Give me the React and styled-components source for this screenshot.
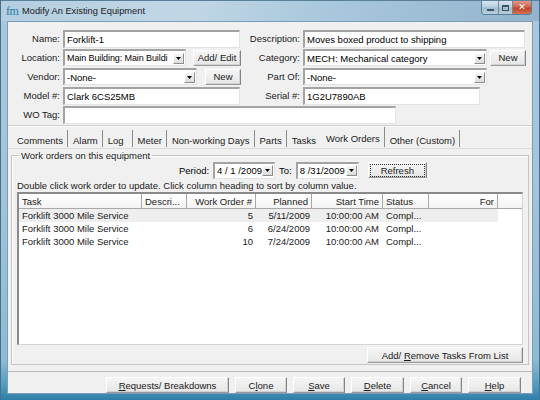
import React from 'react';
import styled, { createGlobalStyle } from 'styled-components';

const Global = createGlobalStyle`
  html, body { margin: 0; padding: 0; background: #fff; }
  body { font-family: "Liberation Sans", Arial, sans-serif; font-size: 9.5px; color: #000; }
  * { box-sizing: border-box; }
`;

const Window = styled.div`
  width: 540px;
  height: 400px;
  display: flex;
  flex-direction: column;
  padding: 0 6px 6px 6px;
  border-left: 1px solid #45708f;
  border-right: 1px solid #45708f;
  background: linear-gradient(to bottom, #a9c8dd 0%, #a2c3d9 50%, #8ebad3 90%, #4a97bb 97%, #2f7ea8 100%);
  overflow: hidden;
`;

const TitleBar = styled.div`
  height: 21px;
  flex: none;
  display: flex;
  align-items: center;
  margin: 0 -6px;
  padding: 0 7px 0 5px;
  background: linear-gradient(to right, rgba(255,255,255,0.12) 0%, rgba(255,255,255,0.28) 35%, rgba(255,255,255,0.05) 55%, rgba(40,90,130,0.18) 100%);
  border-top: 1px solid #5a7f99;
`;

const AppIcon = styled.span`
  font-family: "Liberation Serif", serif;
  font-size: 12px;
  color: #2b7aa6;
  width: 14px;
  margin-right: 2px;
  letter-spacing: -0.5px;
`;

const TitleText = styled.span`
  font-size: 9.3px;
  color: #1a1a1a;
  flex: 1;
`;

const Controls = styled.div`
  align-self: flex-start;
  display: flex;
  border: 1px solid #5b7e96;
  border-top: none;
  border-radius: 0 0 4px 4px;
  overflow: hidden;
`;

const CtlBtn = styled.div`
  width: ${p => p.$w}px;
  height: 13px;
  display: flex;
  align-items: center;
  justify-content: center;
  background: ${p => p.$close
    ? 'linear-gradient(to bottom, #e29a86 0%, #d1644c 45%, #c2412a 55%, #d4734f 100%)'
    : 'linear-gradient(to bottom, #d7e6ef 0%, #b7cedd 45%, #9fbccf 55%, #b7d0de 100%)'};
  border-left: ${p => p.$first ? 'none' : '1px solid #6d8ca2'};
`;

const MinGlyph = styled.span`
  width: 7px; height: 2px; background: #3d5466; margin-top: 4px;
`;
const MaxGlyph = styled.span`
  width: 7px; height: 6px; border: 1px solid #3d5466; border-top-width: 2px;
`;
const CloseGlyph = styled.span`
  color: #fff; font-weight: bold; font-size: 9px; line-height: 9px;
  font-family: "DejaVu Sans", sans-serif;
`;

const Client = styled.div`
  flex: 1;
  display: flex;
  flex-direction: column;
  background: #f0f0f0;
  border: 1px solid #7f9db2;
`;

const FormArea = styled.div`
  padding-top: 7px;
  display: flex;
  flex-direction: column;
`;

const Row = styled.div`
  height: 19px;
  display: flex;
  align-items: center;
`;

const Label = styled.div`
  width: ${p => p.$w}px;
  flex: none;
  text-align: right;
  padding-right: 3px;
  white-space: nowrap;
  color: #1a1a1a;
`;

const Field = styled.div`
  width: ${p => p.$w}px;
  flex: none;
  display: flex;
  align-items: center;
  justify-content: space-between;
`;

const TextBox = styled.div`
  width: ${p => p.$w}px;
  height: 18px;
  background: #fff;
  border-style: solid;
  border-width: 2px 1px 1px 2px;
  border-color: #a3a3a3 #e3e3e3 #e3e3e3 #a3a3a3;
  padding: 0 2px;
  display: flex;
  align-items: center;
  white-space: nowrap;
  overflow: hidden;
`;

const Combo = styled.div`
  width: ${p => p.$w}px;
  height: 17px;
  background: #fff;
  border-style: solid;
  border-width: 2px 1px 1px 2px;
  border-color: #a3a3a3 #e3e3e3 #e3e3e3 #a3a3a3;
  display: flex;
  align-items: center;
  padding-left: 2px;
  padding-right: 1px;
`;

const ComboText = styled.span`
  flex: 1;
  white-space: nowrap;
  overflow: hidden;
  font-size: ${p => p.$fs ?? 9.5}px;
  letter-spacing: ${p => p.$ls ?? 0}px;
`;

const DropBtn = styled.span`
  width: 11px;
  height: 11px;
  flex: none;
  background: linear-gradient(#f4f4f4, #dcdcdc);
  border-style: solid;
  border-width: 1px;
  border-color: #fff #8c8c8c #8c8c8c #fff;
  display: flex;
  align-items: center;
  justify-content: center;
`;

const Arrow = () => (
  <svg width="5" height="3" viewBox="0 0 5 3"><path d="M0 0h5L2.5 3z" fill="#000" /></svg>
);

const Button = styled.div`
  width: ${p => p.$w}px;
  height: 16px;
  flex: none;
  display: flex;
  align-items: center;
  justify-content: center;
  background: linear-gradient(#f5f5f5, #e6e6e6);
  border-style: solid;
  border-width: 1px;
  border-color: #ffffff #848484 #9a9a9a #ffffff;
  box-shadow: inset -1px -1px 0 #d2d2d2;
  white-space: nowrap;
  color: #1a1a1a;
`;

const Focus = styled.span`
  border: 1px dotted #333;
  padding: 0 10px;
  line-height: 11px;
`;

const Divider = styled.div`
  margin-top: 1px;
  height: 2px;
  border-top: 1px solid #cfcfcf;
  border-bottom: 1px solid #fafafa;
`;

const TabStrip = styled.div`
  margin-top: 1px;
  height: 20px;
  display: flex;
  align-items: flex-end;
  padding-left: 4px;
`;

const Tab = styled.div`
  height: ${p => p.$active ? 20 : 17}px;
  line-height: 11px;
  padding: ${p => p.$active ? '6px' : '5px'} ${p => 4 + (p.$extra || 0)}px 0 5px;
  border-right: 1px solid ${p => p.$sep ? '#8a8a8a' : 'transparent'};
  white-space: nowrap;
  margin-bottom: 1px;
  color: #1a1a1a;
`;

const TabPanel = styled.div`
  height: 224px;
  border-top: 1px solid #dcdcdc;
  border-bottom: 1px solid #bcbcbc;
  padding: 1px 3px 0 3px;
`;

const Group = styled.fieldset`
  margin: 0;
  padding: 0 5px 1px 5px;
  border: 1px solid #c4c4c4;
  box-shadow: inset 1px 1px 0 #fff;
  display: flex;
  flex-direction: column;
  min-width: 0;
`;

const Legend = styled.legend`
  padding: 0 2px;
  margin-left: 2px;
  line-height: 11px;
  color: #1a1a1a;
`;

const PeriodRow = styled.div`
  margin-top: 1px;
  height: 16px;
  display: flex;
  align-items: center;
  padding-left: 162px;
`;

const InlineLabel = styled.span`
  margin-right: ${p => p.$mr}px;
  margin-left: ${p => p.$ml ?? 0}px;
  white-space: nowrap;
`;

const Hint = styled.div`
  margin-top: 2px;
  line-height: 11px;
  white-space: nowrap;
  color: #1a1a1a;
`;

const ListView = styled.div`
  margin-top: 1px;
  height: 153px;
  background: #fff;
  border-style: solid;
  border-width: 2px 1px 1px 2px;
  border-color: #8a8a8a #d4d4d4 #d4d4d4 #8a8a8a;
  overflow: hidden;
`;

const cols = '123px 45px 69px 56px 71px 46px 69px 1fr';

const HeaderRow = styled.div`
  display: grid;
  grid-template-columns: ${cols};
  height: 15px;
  border-bottom: 1px solid #a8a8a8;
  background: linear-gradient(#ffffff, #f3f3f3);
`;

const HeadCell = styled.div`
  display: flex;
  align-items: center;
  justify-content: ${p => p.$right ? 'flex-end' : 'flex-start'};
  padding: ${p => p.$right ? '0 3px 0 0' : '0 0 0 3px'};
  border-right: ${p => p.$last ? 'none' : '1px solid #a8a8a8'};
  white-space: nowrap;
  overflow: hidden;
  color: #222;
`;

const DataRow = styled.div`
  display: grid;
  grid-template-columns: ${cols};
  height: 13px;
`;

const Cell = styled.div`
  display: flex;
  align-items: center;
  justify-content: ${p => p.$right ? 'flex-end' : 'flex-start'};
  padding: ${p => p.$right ? `0 ${p.$pr ?? 3}px 0 0` : '0 0 0 3px'};
  background: ${p => p.$hl ? '#eeeeee' : 'transparent'};
  white-space: nowrap;
  overflow: hidden;
  color: #1a1a1a;
`;

const AddRow = styled.div`
  margin-top: 2px;
  display: flex;
  justify-content: flex-end;
`;

const BottomBar = styled.div`
  margin-top: 5px;
  display: flex;
  justify-content: flex-end;
  gap: 6px;
  padding-right: 11px;
`;

const U = styled.span`
  text-decoration: underline;
`;

const rows = [
  { task: 'Forklift 3000 Mile Service', wo: '5', planned: '5/11/2009' },
  { task: 'Forklift 3000 Mile Service', wo: '6', planned: '6/24/2009' },
  { task: 'Forklift 3000 Mile Service', wo: '10', planned: '7/24/2009' },
];

const tabs = [
  { t: 'Comments', sep: true },
  { t: 'Alarm', sep: true },
  { t: 'Log', sep: true, extra: 4 },
  { t: 'Meter', sep: true },
  { t: 'Non-working Days', sep: true },
  { t: 'Parts', sep: true },
  { t: 'Tasks', sep: false },
  { t: 'Work Orders', sep: true, active: true },
  { t: 'Other (Custom)', sep: true },
];

export default function App() {
  return (
    <>
      <Global />
      <Window>
        <TitleBar>
          <AppIcon>fm</AppIcon>
          <TitleText>Modify An Existing Equipment</TitleText>
          <Controls>
            <CtlBtn $w={16} $first><MinGlyph /></CtlBtn>
            <CtlBtn $w={14}><MaxGlyph /></CtlBtn>
            <CtlBtn $w={19} $close><CloseGlyph>✕</CloseGlyph></CtlBtn>
          </Controls>
        </TitleBar>
        <Client>
          <FormArea>
            <Row>
              <Label $w={55}>Name:</Label>
              <Field $w={178}><TextBox $w={177}>Forklift-1</TextBox></Field>
              <Label $w={62}>Description:</Label>
              <Field $w={223}><TextBox $w={222}>Moves boxed product to shipping</TextBox></Field>
            </Row>
            <Row>
              <Label $w={55}>Location:</Label>
              <Field $w={178}>
                <Combo $w={123}><ComboText $fs={9} $ls={-0.1}>Main Building: Main Buildi</ComboText><DropBtn><Arrow /></DropBtn></Combo>
                <Button $w={48}>Add/ Edit</Button>
              </Field>
              <Label $w={62}>Category:</Label>
              <Field $w={223}>
                <Combo $w={184}><ComboText>MECH: Mechanical category</ComboText><DropBtn><Arrow /></DropBtn></Combo>
                <Button $w={36}>New</Button>
              </Field>
            </Row>
            <Row>
              <Label $w={55}>Vendor:</Label>
              <Field $w={178}>
                <Combo $w={134}><ComboText>-None-</ComboText><DropBtn><Arrow /></DropBtn></Combo>
                <Button $w={36}>New</Button>
              </Field>
              <Label $w={62}>Part Of:</Label>
              <Field $w={223}>
                <Combo $w={184}><ComboText>-None-</ComboText><DropBtn><Arrow /></DropBtn></Combo>
              </Field>
            </Row>
            <Row>
              <Label $w={55}>Model #:</Label>
              <Field $w={178}><TextBox $w={177}>Clark 6CS25MB</TextBox></Field>
              <Label $w={62}>Serial #:</Label>
              <Field $w={223}><TextBox $w={177}>1G2U7890AB</TextBox></Field>
            </Row>
            <Row>
              <Label $w={55}>WO Tag:</Label>
              <Field $w={334}><TextBox $w={333} /></Field>
            </Row>
          </FormArea>
          <Divider />
          <TabStrip>
            {tabs.map(t => (
              <Tab key={t.t} $sep={t.sep} $active={t.active} $extra={t.extra}>{t.t}</Tab>
            ))}
          </TabStrip>
          <TabPanel>
            <Group>
              <Legend>Work orders on this equipment</Legend>
              <PeriodRow>
                <InlineLabel $mr={4}>Period:</InlineLabel>
                <Combo $w={62}><ComboText>4 / 1 /2009</ComboText><DropBtn><Arrow /></DropBtn></Combo>
                <InlineLabel $ml={4} $mr={4}>To:</InlineLabel>
                <Combo $w={63}><ComboText>8 /31/2009</ComboText><DropBtn><Arrow /></DropBtn></Combo>
                <InlineLabel $ml={9} $mr={0} />
                <Button $w={59}><Focus>Refresh</Focus></Button>
              </PeriodRow>
              <Hint>Double click work order to update. Click column heading to sort by column value.</Hint>
              <ListView>
                <HeaderRow>
                  <HeadCell>Task</HeadCell>
                  <HeadCell>Descri...</HeadCell>
                  <HeadCell $right>Work Order #</HeadCell>
                  <HeadCell $right>Planned</HeadCell>
                  <HeadCell $right>Start Time</HeadCell>
                  <HeadCell>Status</HeadCell>
                  <HeadCell $right>For</HeadCell>
                  <HeadCell $last />
                </HeaderRow>
                {rows.map((r, i) => {
                  const hl = i === 0;
                  return (
                    <DataRow key={i}>
                      <Cell $hl={hl}>{r.task}</Cell>
                      <Cell $hl={hl}></Cell>
                      <Cell $hl={hl} $right>{r.wo}</Cell>
                      <Cell $hl={hl} $right $pr={2}>{r.planned}</Cell>
                      <Cell $hl={hl} $right $pr={4}>10:00:00 AM</Cell>
                      <Cell $hl={hl}>Compl...</Cell>
                      <Cell $hl={hl}></Cell>
                      <Cell></Cell>
                    </DataRow>
                  );
                })}
              </ListView>
              <AddRow>
                <Button $w={156}>Add/&nbsp;<U>R</U>emove Tasks From List</Button>
              </AddRow>
            </Group>
          </TabPanel>
          <BottomBar>
            <Button $w={123}><U>R</U>equests/ Breakdowns</Button>
            <Button $w={52}>C<U>l</U>one</Button>
            <Button $w={52}><U>S</U>ave</Button>
            <Button $w={53}><U>D</U>elete</Button>
            <Button $w={52}><U>C</U>ancel</Button>
            <Button $w={53}><U>H</U>elp</Button>
          </BottomBar>
        </Client>
      </Window>
    </>
  );
}
